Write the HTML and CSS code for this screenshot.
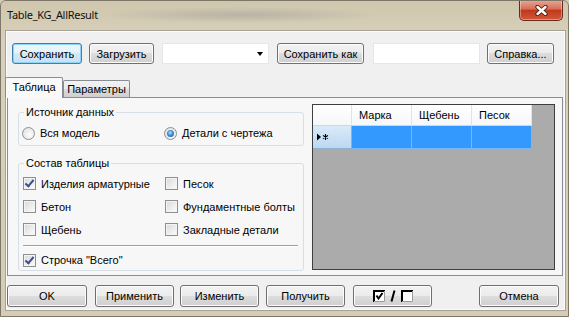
FILE: index.html
```html
<!DOCTYPE html>
<html lang="ru">
<head>
  <meta charset="UTF-8">
  <title>Table_KG_AllResult</title>
  <link rel="stylesheet" href="styles.css">
</head>
<body>

  <div class="window">
    <div class="titlebar">
      <span class="title">Table_KG_AllResult</span>
      <button class="close-btn">
        <svg width="13" height="11" viewBox="0 0 13 11">
          <path d="M2.5 2L10.5 9M10.5 2L2.5 9" stroke="#4a1a12" stroke-width="4.2" stroke-linecap="round"/>
          <path d="M2.5 2L10.5 9M10.5 2L2.5 9" stroke="#fff" stroke-width="2.4" stroke-linecap="round"/>
        </svg>
      </button>
    </div>

    <div class="client">
      <div class="toolbar">
        <button class="btn btn-default btn-save">Сохранить</button>
        <button class="btn btn-load">Загрузить</button>
        <div class="combo"><span class="combo-arrow"></span></div>
        <button class="btn btn-saveas">Сохранить как</button>
        <input class="textbox" type="text">
        <button class="btn btn-help">Справка...</button>
      </div>

      <div class="tabs">
        <div class="tab active">Таблица</div>
        <div class="tab">Параметры</div>
      </div>

      <div class="tab-page">
        <div class="settings">
          <fieldset class="group group-source">
            <legend>Источник данных</legend>
            <div class="options">
              <label class="opt"><span class="radio"></span>Вся модель</label>
              <label class="opt"><span class="radio checked"></span>Детали с чертежа</label>
            </div>
          </fieldset>

          <fieldset class="group group-content">
            <legend>Состав таблицы</legend>
            <div class="options">
              <label class="opt"><span class="check checked"></span>Изделия арматурные</label>
              <label class="opt"><span class="check"></span>Песок</label>
              <label class="opt"><span class="check"></span>Бетон</label>
              <label class="opt"><span class="check"></span>Фундаментные болты</label>
              <label class="opt"><span class="check"></span>Щебень</label>
              <label class="opt"><span class="check"></span>Закладные детали</label>
            </div>
            <div class="separator"></div>
            <label class="opt opt-total"><span class="check checked"></span>Строчка "Всего"</label>
          </fieldset>
        </div>

        <div class="grid">
          <div class="grid-head">
            <div class="cell corner"></div>
            <div class="cell col">Марка</div>
            <div class="cell col">Щебень</div>
            <div class="cell col">Песок</div>
          </div>
          <div class="grid-row">
            <div class="cell row-head">
              <svg width="12" height="8" viewBox="0 0 12 8">
                <path d="M0 0.5L4 4L0 7.5Z" fill="#000"/>
                <path d="M8.5 1V7M6 2.5L11 5.5M11 2.5L6 5.5" stroke="#000" stroke-width="1.1"/>
              </svg>
            </div>
            <div class="cell sel"></div>
            <div class="cell sel"></div>
            <div class="cell sel"></div>
          </div>
        </div>
      </div>

      <div class="footer">
        <button class="btn btn-ok">OK</button>
        <button class="btn btn-apply">Применить</button>
        <button class="btn btn-edit">Изменить</button>
        <button class="btn btn-get">Получить</button>
        <button class="btn btn-toggle">
          <svg width="40" height="12" viewBox="0 0 40 12">
            <rect x="0" y="0" width="12" height="12" fill="#fff"/>
            <path d="M1 12V1H12" stroke="#000" stroke-width="2" fill="none"/>
            <path d="M11.5 1V11.5H1" stroke="#9a9a9a" stroke-width="1" fill="none"/>
            <path d="M3.5 5.5L5.5 8.5L9.5 3" stroke="#000" stroke-width="2" fill="none"/>
            <path d="M18.5 11.5L21.5 0.5" stroke="#000" stroke-width="2"/>
            <rect x="28" y="0" width="12" height="12" fill="#fff"/>
            <path d="M29 12V1H40" stroke="#000" stroke-width="2" fill="none"/>
            <path d="M39.5 1V11.5H29" stroke="#9a9a9a" stroke-width="1" fill="none"/>
          </svg>
        </button>
        <button class="btn btn-cancel">Отмена</button>
      </div>
    </div>
  </div>

</body>
</html>
```

FILE: styles.css
```css
* {
  box-sizing: border-box;
}

html, body {
  margin: 0;
  padding: 0;
}

body {
  font-family: "Liberation Sans", Arial, sans-serif;
  font-size: 11px;
  color: #000;
  background: #d4cbb3;
}

.window {
  width: 569px;
  height: 317px;
  border: 1px solid #7d776a;
  border-radius: 6px 6px 0 0;
  overflow: hidden;
  background: linear-gradient(#cbc2a9, #d8d0ba 40px, #d5ccb3);
}

/* Title bar */
.titlebar {
  height: 29px;
  display: flex;
  align-items: flex-start;
  background:
    radial-gradient(ellipse 140px 8px at 240px 14px, rgba(110, 110, 120, 0.25), transparent),
    linear-gradient(#cfc6ad, #d6ceb8);
}

.title {
  font-family: "Noto Sans", "Open Sans", sans-serif;
  font-size: 11px;
  letter-spacing: -0.3px;
  line-height: 16px;
  margin: 6px 0 0 6px;
  color: #111;
}

.close-btn {
  margin: -1px 5px 0 auto;
  width: 44px;
  height: 21px;
  padding: 0;
  border: 1px solid #6b2a1f;
  border-top: none;
  border-radius: 0 0 5px 5px;
  background: linear-gradient(#e8a998, #d56e55 45%, #c0391c 52%, #d2583a 100%);
  box-shadow: inset 0 0 0 1px rgba(255, 255, 255, 0.35);
  display: flex;
  align-items: center;
  justify-content: center;
}

/* Client area */
.client {
  margin: 0 2px 0 4px;
  height: 281px;
  padding-top: 12px;
  background: #f0f0f0;
  border: 1px solid #a8a294;
  box-shadow: inset 0 0 0 1px #fbfbfb;
}

.btn {
  font-family: "Liberation Sans", Arial, sans-serif;
  font-size: 11px;
  color: #000;
  height: 21px;
  padding: 0;
  border: 1px solid #707070;
  border-radius: 3px;
  background: linear-gradient(#f2f2f2 0%, #ebebeb 50%, #dddddd 50%, #cfcfcf 100%);
  box-shadow: inset 0 0 0 1px #fcfcfc;
}

.btn-default {
  border-color: #3c7fb1;
  box-shadow: inset 0 0 0 1px #8fd3f8;
  background: linear-gradient(#eaf6fd 0%, #e3f2fb 50%, #d3e9f7 50%, #c6e1f3 100%);
}

.toolbar {
  display: flex;
  align-items: center;
  height: 21px;
  padding-left: 6px;
}

.btn-save { width: 70px; }
.btn-load { width: 65px; margin-left: 7px; }
.btn-saveas { width: 87px; margin-left: 8px; }
.btn-help { width: 67px; margin-left: 7px; }

.combo {
  position: relative;
  width: 107px;
  height: 21px;
  margin-left: 8px;
  background: #fff;
  border: 1px solid #e6e6e6;
}

.combo-arrow {
  position: absolute;
  right: 5px;
  top: 8px;
  border-left: 3.5px solid transparent;
  border-right: 3.5px solid transparent;
  border-top: 4px solid #000;
}

.textbox {
  width: 107px;
  height: 21px;
  margin-left: 9px;
  border: 1px solid #e6e6e6;
  background: #fff;
  padding: 0;
}

/* Tabs */
.tabs {
  display: flex;
  align-items: flex-end;
  height: 20px;
  margin: 13px 0 0 -1px;
  position: relative;
  z-index: 1;
}

.tab {
  width: 67px;
  height: 17px;
  line-height: 16px;
  text-align: center;
  border: 1px solid #898c95;
  border-bottom: none;
  border-radius: 2px 2px 0 0;
  background: linear-gradient(#f2f2f2 0%, #ebebeb 50%, #dddddd 50%, #cfcfcf 100%);
}

.tab.active {
  width: 58px;
  height: 21px;
  line-height: 18px;
  margin-bottom: -1px;
  background: #f9f9f9;
}

.tab-page {
  width: 556px;
  height: 179px;
  margin-left: 1px;
  border: 1px solid #898c95;
  background: #f7f7f7;
  display: flex;
  gap: 8px;
  padding: 6px 0 0 10px;
}

.settings {
  width: 286px;
  padding-top: 1px;
}

.group {
  margin: 0;
  min-width: 0;
  padding: 0 0 0 3px;
  border: 1px solid #d5dfe5;
  border-radius: 3px;
}

.group legend {
  margin-left: 2px;
  padding: 0 2px;
  line-height: 14px;
}

.options {
  display: grid;
  grid-template-columns: 142px auto;
}

.group-source .options {
  margin-top: 6px;
  padding-bottom: 4px;
}

.group-source .opt {
  height: 16px;
}

.group-content {
  margin-top: 10px;
  padding-bottom: 1px;
}

.group-content .options {
  margin-top: 2px;
}

.group-content .options .opt {
  height: 23px;
  padding-left: 1px;
}

.opt {
  display: flex;
  align-items: center;
  gap: 5px;
}

.opt-total {
  height: 18px;
  padding-left: 1px;
}

.separator {
  height: 2px;
  margin: 4px 5px 4px 1px;
  border-top: 1px solid #a0a0a0;
  border-bottom: 1px solid #fff;
}

.radio {
  width: 13px;
  height: 13px;
  border-radius: 50%;
  border: 1px solid #8e8f8f;
  background: radial-gradient(circle at 60% 60%, #fdfdfd, #dcdcdc);
  display: flex;
  align-items: center;
  justify-content: center;
}

.radio.checked::after {
  content: "";
  width: 7px;
  height: 7px;
  border-radius: 50%;
  background: radial-gradient(circle at 45% 40%, #b9e3ff 0, #3d8fd8 45%, #164f8e 100%);
}

.check {
  position: relative;
  width: 13px;
  height: 13px;
  border: 1px solid #8e8f8f;
  background: linear-gradient(135deg, #d8d8d8, #fdfdfd);
  box-shadow: inset 0 0 0 1px #f4f4f4;
}

.check.checked::after {
  content: "";
  position: absolute;
  left: 3px;
  top: 0px;
  width: 3px;
  height: 7px;
  border-right: 2px solid #3b4f8c;
  border-bottom: 2px solid #3b4f8c;
  transform: rotate(40deg);
}

/* Data grid */
.grid {
  width: 243px;
  height: 166px;
  border: 1px solid #3f3f3f;
  background: #ababab;
}

.grid-head, .grid-row {
  display: flex;
}

.cell {
  width: 60px;
  border-right: 1px solid #e3e3e3;
}

.grid-head .cell {
  height: 21px;
  line-height: 20px;
  padding-left: 7px;
  background: linear-gradient(#ffffff, #f6f7f9);
  border-bottom: 1px solid #d5d5d5;
}

.grid-head .corner,
.grid-row .row-head {
  width: 39px;
}

.grid-row .cell {
  height: 23px;
}

.cell.sel {
  background: #3399ff;
  border-right-color: #7ab8f5;
  border-bottom: 1px solid #7ab8f5;
}

.row-head {
  display: flex;
  align-items: center;
  padding-left: 4px;
  background: linear-gradient(#d9eaf9, #bcd8f1);
  border-right-color: #8fb1d2;
  border-bottom: 1px solid #8fb1d2;
}

/* Bottom buttons */
.footer {
  display: flex;
  margin-top: 9px;
  padding-left: 1px;
}

.footer .btn {
  height: 22px;
  width: 79px;
}

.footer .btn-ok { width: 80px; }
.footer .btn-apply { margin-left: 8px; }
.footer .btn-edit { margin-left: 6px; }
.footer .btn-get { margin-left: 7px; }
.footer .btn-toggle {
  margin-left: 8px;
  display: flex;
  align-items: center;
  justify-content: center;
}
.footer .btn-cancel {
  width: 80px;
  margin-left: auto;
  margin-right: 6px;
}
```
